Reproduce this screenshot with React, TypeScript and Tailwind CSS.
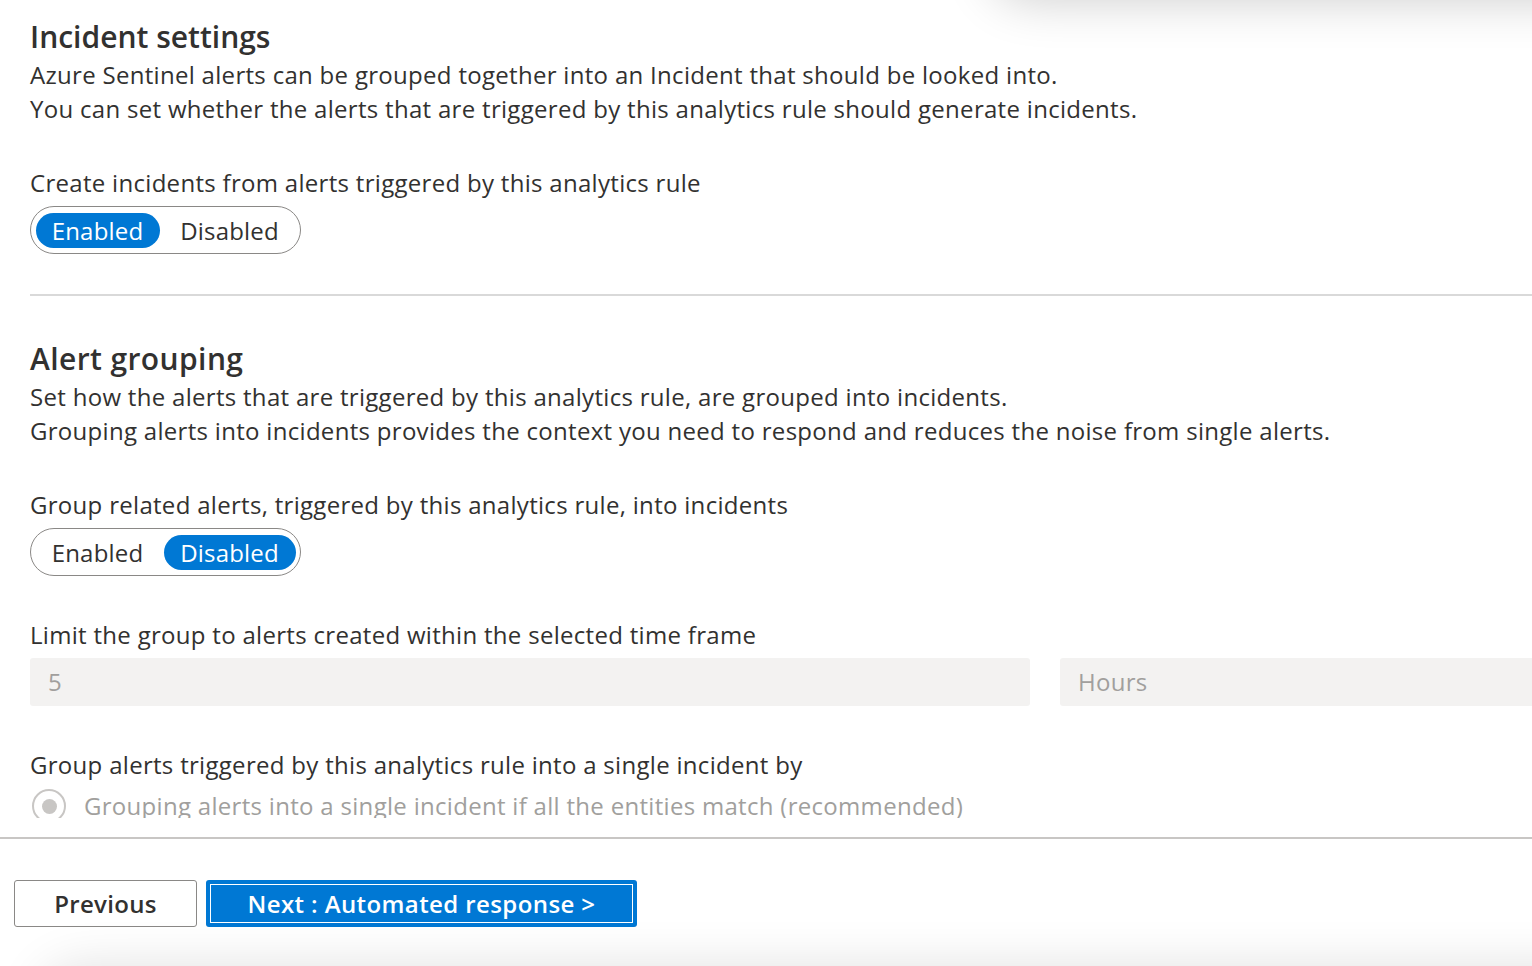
import React from "react";

const font = { fontFamily: '"Open Sans", "Noto Sans", sans-serif' };

function Toggle({ enabled }: { enabled: boolean }) {
  const on = "bg-[#0078d4] text-white";
  const off = "text-[#323130]";
  return (
    <div className="mt-[6px] flex h-[48px] w-[271px] items-center gap-[4px] rounded-full border-[1.5px] border-[#8a8886] pl-[4.5px] pr-[3.5px]">
      <div className={`flex h-[35px] w-[124px] items-center justify-center rounded-full pt-[1px] text-[24px] leading-none tracking-[0.2px] ${enabled ? on : off}`}>
        Enabled
      </div>
      <div className={`flex h-[35px] w-[132px] items-center justify-center rounded-full pt-[1px] text-[24px] leading-none tracking-[0.2px] ${enabled ? off : on}`}>
        Disabled
      </div>
    </div>
  );
}

export default function App() {
  return (
    <div className="relative h-[966px] w-[1532px] overflow-hidden bg-white text-[#323130] tracking-[0.3px]" style={font}>
      {/* top shadow */}
      <div className="pointer-events-none absolute left-[990px] right-[-60px] top-[-60px] h-[60px] rounded-bl-[40px] shadow-[0_0_50px_rgba(0,0,0,0.2)]" />
      <div className="flex h-full flex-col">
        <div className="h-[818px] overflow-hidden pl-[30px]">
          <h2 className="mt-[17px] text-[30px] font-semibold leading-[40px] tracking-[0px]">Incident settings</h2>
          <p className="mt-[1px] text-[24px] leading-[34px]">
            Azure Sentinel alerts can be grouped together into an Incident that should be looked into.
            <br />
            You can set whether the alerts that are triggered by this analytics rule should generate incidents.
          </p>
          <div className="mt-[40px] text-[24px] leading-[34px]">Create incidents from alerts triggered by this analytics rule</div>
          <Toggle enabled={true} />
          <div className="mt-[40px] h-[2px] bg-[#d9d9d9]" />

          <h2 className="mt-[43px] text-[30px] font-semibold leading-[40px] tracking-[0.4px]">Alert grouping</h2>
          <p className="mt-[1px] text-[24px] leading-[34px]">
            Set how the alerts that are triggered by this analytics rule, are grouped into incidents.
            <br />
            Grouping alerts into incidents provides the context you need to respond and reduces the noise from single alerts.
          </p>
          <div className="mt-[40px] text-[24px] leading-[34px]">Group related alerts, triggered by this analytics rule, into incidents</div>
          <Toggle enabled={false} />

          <div className="mt-[42px] text-[24px] leading-[34px]">Limit the group to alerts created within the selected time frame</div>
          <div className="mt-[6px] flex gap-[30px]">
            <div className="flex h-[48px] w-[1000px] shrink-0 items-center rounded-[3px] bg-[#f3f2f1] pl-[18px] text-[24px] text-[#a19f9d]">5</div>
            <div className="flex h-[48px] w-[600px] shrink-0 items-center rounded-[3px] bg-[#f3f2f1] pl-[18px] text-[24px] text-[#a19f9d]">Hours</div>
          </div>

          <div className="mt-[42px] text-[24px] leading-[34px]">Group alerts triggered by this analytics rule into a single incident by</div>
          <div className="mt-[7px] flex items-center">
            <div className="ml-[2px] flex h-[34px] w-[34px] items-center justify-center rounded-full border-[2px] border-[#c8c6c4]">
              <div className="h-[15px] w-[15px] rounded-full bg-[#c8c6c4]" />
            </div>
            <span className="ml-[18px] text-[24px] leading-[34px] text-[#a19f9d]">
              Grouping alerts into a single incident if all the entities match (recommended)
            </span>
          </div>
        </div>
        <div className="h-[19px]" />
        <div className="h-[2px] bg-[#c8c6c4]" />
        <div className="flex gap-[9px] pl-[14px] pt-[41px]">
          <button className="flex h-[47px] w-[183px] items-center justify-center rounded-[3px] border-[1.5px] border-[#8a8886] bg-white text-[24px] font-semibold tracking-[0.3px] text-[#323130]">
            Previous
          </button>
          <button className="flex h-[47px] w-[431px] items-center justify-center rounded-[3px] bg-[#0078d4] p-[4px]">
            <span className="flex h-full w-full items-center justify-center border border-white text-[24px] font-semibold tracking-[0.4px] text-white">
              Next : Automated response &gt;
            </span>
          </button>
        </div>
      </div>
      {/* bottom shadow */}
      <div className="pointer-events-none absolute bottom-[-60px] left-[40px] right-[-60px] h-[60px] rounded-tl-[40px] shadow-[0_0_50px_rgba(0,0,0,0.12)]" />
    </div>
  );
}
